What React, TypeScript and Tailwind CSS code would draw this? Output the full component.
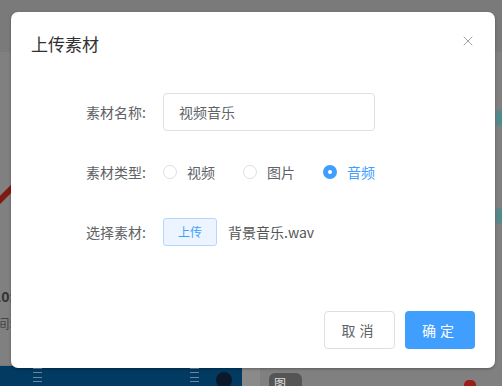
import { X } from 'lucide-react'

const font = { fontFamily: '"Noto Sans CJK SC", "Noto Sans", sans-serif' }

function Radio({ label, checked }: { label: string; checked?: boolean }) {
  return (
    <label className="flex items-center gap-[10px]">
      {checked ? (
        <span className="flex h-[14px] w-[14px] items-center justify-center rounded-full bg-[#409eff]">
          <span className="h-[4px] w-[4px] rounded-full bg-white" />
        </span>
      ) : (
        <span className="h-[14px] w-[14px] rounded-full border border-[#dcdfe6] bg-white" />
      )}
      <span className={checked ? 'text-[#409eff]' : 'text-[#606266]'}>{label}</span>
    </label>
  )
}

function FormRow({ label, children }: { label: string; children: React.ReactNode }) {
  return (
    <div className="flex h-[38px] items-center">
      <div className="w-[136px] pr-[1px] text-right text-[#606266]">{label}</div>
      <div className="ml-[16px] flex items-center">{children}</div>
    </div>
  )
}

export default function App() {
  return (
    <div className="relative h-[386px] w-[502px] overflow-hidden bg-[#808080] text-[14px]" style={font}>
      {/* dimmed page behind the dialog */}
      <div className="flex h-full flex-col">
        <div className="h-[52px] bg-[#7a7a7a]" />
        <div className="flex flex-1">
          <div className="flex w-[242px] flex-col">
            <svg width="40" height="60" viewBox="0 0 40 60" className="mt-[114px]">
              <path d="M-2 36 L20 14" stroke="#7d1a12" strokeWidth="6" />
            </svg>
            <div className="mt-[60px] flex w-[14px] justify-end overflow-hidden whitespace-nowrap font-bold text-[#333]">
              10:
            </div>
            <div className="mt-[6px] flex w-[13px] justify-end overflow-hidden whitespace-nowrap text-[13px] text-[#444]">
              时间:
            </div>
            <div className="mt-auto h-[1px] bg-[#777]" />
          </div>
          <div className="flex flex-1 flex-col items-end">
            <div className="mt-[58px] h-[16px] w-[6px] rounded-full bg-[#4d8a8e] blur-[1px]" />
            <div className="mt-[82px] h-[16px] w-[6px] rounded-full bg-[#4d8a8e] blur-[1px]" />
          </div>
        </div>
        <div className="flex h-[20px]">
          <div className="flex w-[242px] items-start bg-[#023a62] pl-[33px] pr-[10px]">
            <div className="mt-[2px] flex h-[14px] w-[9px] flex-col justify-between">
              <span className="h-[1px] bg-[#6a87a3]" />
              <span className="h-[1px] bg-[#6a87a3]" />
              <span className="h-[1px] bg-[#6a87a3]" />
              <span className="h-[1px] bg-[#6a87a3]" />
            </div>
            <div className="ml-[148px] mt-[2px] flex h-[14px] w-[9px] flex-col justify-between">
              <span className="h-[1px] bg-[#6a87a3]" />
              <span className="h-[1px] bg-[#6a87a3]" />
              <span className="h-[1px] bg-[#6a87a3]" />
              <span className="h-[1px] bg-[#6a87a3]" />
            </div>
            <div className="ml-auto mt-[6px] h-[16px] w-[16px] rounded-full bg-[#0b1a2a]" />
          </div>
          <div className="w-[18px] bg-[#8a8a8a]" />
          <div className="ml-[9px] mt-[7px] h-[20px] w-[33px] rounded-[6px] bg-[#555] px-[5px] text-[12px] leading-[20px] text-[#ddd]">
            图片
          </div>
          <div className="ml-auto mr-[26px] mt-[14px] h-[10px] w-[12px] rounded-full bg-[#9c1c16]" />
        </div>
      </div>

      {/* dialog */}
      <div className="absolute left-[11px] top-[12px] flex h-[356px] w-[484px] flex-col rounded-[7px] bg-white shadow-[0_1px_3px_rgba(0,0,0,0.3)]">
        <div className="flex items-start justify-between pl-[20px] pr-[19px] pt-[20px]">
          <span className="text-[17px] leading-[24px] text-[#303133]">上传素材</span>
          <X className="mt-[1px] h-[16px] w-[16px] text-[#909399]" strokeWidth={1.3} />
        </div>

        <div className="mt-[37px] flex flex-col gap-[22px]">
          <FormRow label="素材名称:">
            <div className="flex h-[38px] w-[212px] items-center rounded-[4px] border border-[#dcdfe6] px-[15px] text-[#606266]">
              视频音乐
            </div>
          </FormRow>
          <FormRow label="素材类型:">
            <div className="flex items-center gap-[28px]">
              <Radio label="视频" />
              <Radio label="图片" />
              <Radio label="音频" checked />
            </div>
          </FormRow>
          <FormRow label="选择素材:">
            <button className="h-[28px] w-[54px] rounded-[3px] border border-[#b3d8ff] bg-[#ecf5ff] text-[12px] text-[#409eff]">
              上传
            </button>
            <span className="ml-[11px] text-[#555]">背景音乐.wav</span>
          </FormRow>
        </div>

        <div className="mt-auto flex justify-end gap-[10px] pb-[19px] pr-[20px]">
          <button className="h-[38px] w-[71px] rounded-[4px] border border-[#dcdfe6] bg-white tracking-[4px] text-[#606266]">
            取消
          </button>
          <button className="h-[38px] w-[70px] rounded-[4px] bg-[#409eff] tracking-[4px] text-white">
            确定
          </button>
        </div>
      </div>
    </div>
  )
}
